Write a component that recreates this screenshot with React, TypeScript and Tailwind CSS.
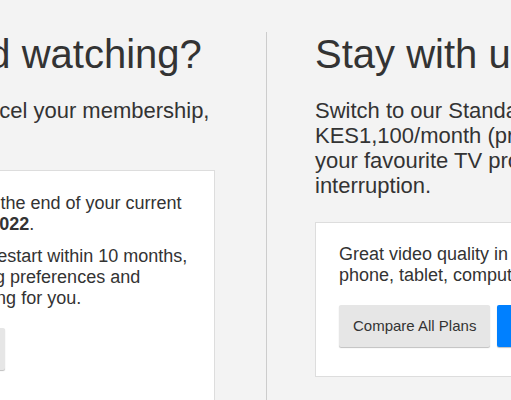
export default function App() {
  return (
    <div className="min-h-screen overflow-hidden bg-[#f3f3f3] font-['Liberation_Sans',Arial,sans-serif] text-[#333]">
      <div className="ml-[-254px] flex w-[1100px] pt-[32px]">
        {/* Cancel column */}
        <div className="mr-[51px] w-[469px] shrink-0">
          <h1 className="whitespace-nowrap text-[40px] leading-[44px]">Finally finished watching?</h1>
          <p className="mt-[22px] whitespace-nowrap text-[22px] leading-[25px]">
            Should you choose to cancel your membership,
            <br />
            here's what to expect.
          </p>
          <div className="mt-[22px] border border-[#dddddd] bg-white px-[23px] pt-[22px] pb-[40px]">
            <p className="whitespace-nowrap text-[18px] leading-[21px]">
              Your membership will end at the end of your current
              <br />
              billing period on <b>March 10, 2022</b>.
            </p>
            <p className="mt-[11px] whitespace-nowrap text-[18px] leading-[21px]">
              Changed your mind? If you restart within 10 months,
              <br />
              your profiles, My List, viewing preferences and
              <br />
              account settings will be waiting for you.
            </p>
            <button className="mt-[19px] h-[42px] w-[235px] rounded-[2px] bg-[#e6e6e6] text-[15px] text-[#333] shadow-[0_1px_1px_rgba(0,0,0,0.25)]">
              Finish Cancellation
            </button>
          </div>
        </div>

        {/* Downgrade offer column */}
        <div className="shrink-0 border-l border-[#cccccc] pl-[48px]">
          <div className="w-[469px]">
            <h1 className="whitespace-nowrap text-[40px] leading-[44px]">Stay with us instead?</h1>
            <p className="mt-[22px] whitespace-nowrap text-[22px] leading-[25px]">
              Switch to our Standard plan for
              <br />
              KES1,100/month (previously KES1,450) and enjoy
              <br />
              your favourite TV programmes and films without
              <br />
              interruption.
            </p>
            <div className="mt-[24px] border border-[#dddddd] bg-white px-[23px] pt-[21px] pb-[29px]">
              <p className="whitespace-nowrap text-[18px] leading-[21px]">
                Great video quality in HD. Watch on your TV,
                <br />
                phone, tablet, computer and games console.
              </p>
              <div className="mt-[19px] flex gap-[7px]">
                <button className="h-[42px] rounded-[2px] bg-[#e6e6e6] px-[14px] text-[15px] text-[#333] shadow-[0_1px_1px_rgba(0,0,0,0.25)]">
                  Compare All Plans
                </button>
                <button className="h-[42px] rounded-[2px] bg-[#0080ff] px-[14px] text-[15px] text-white shadow-[0_1px_1px_rgba(0,0,0,0.25)]">
                  Switch to Standard
                </button>
              </div>
            </div>
          </div>
        </div>
      </div>
    </div>
  );
}
